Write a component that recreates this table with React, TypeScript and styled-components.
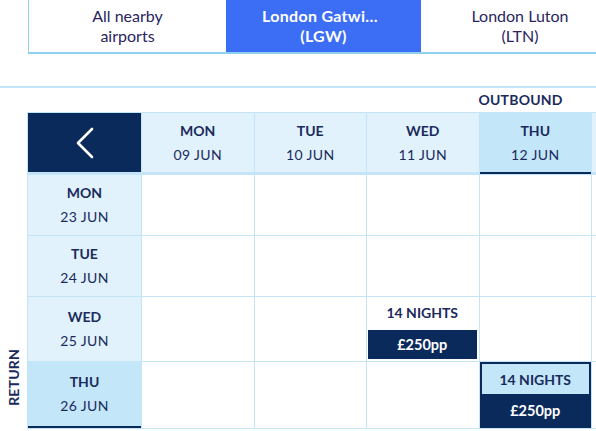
import React from 'react';
import styled, { createGlobalStyle } from 'styled-components';

const NAVY = '#0b2a5c';
const TEXT = '#1a2a5c';
const LINE = '#c4e5f8';
const HEAD_BG = '#e1f2fc';
const SEL_BG = '#c3e6f9';
const COLS = '113px repeat(5, 111.5px) 60px';

const GlobalStyle = createGlobalStyle`
  html, body {
    margin: 0;
    padding: 0;
    background: #ffffff;
    overflow: hidden;
  }
  body {
    font-family: Lato, "Liberation Sans", sans-serif;
    color: ${TEXT};
  }
`;

const Page = styled.div`
  width: 596px;
  height: 431px;
  overflow: hidden;
`;

const Tabs = styled.div`
  display: flex;
  margin-left: 28px;
  height: 52px;
  border-bottom: 2px solid #8fcff2;
  border-left: 1px solid #8fcff2;
  width: max-content;
`;

const Tab = styled.div<{ $active?: boolean; $w: number }>`
  width: ${p => p.$w}px;
  box-sizing: border-box;
  padding: 0 ${p => (p.$active ? 36 : 30)}px;
  display: flex;
  flex-direction: column;
  justify-content: center;
  align-items: center;
  text-align: center;
  font-size: 16px;
  line-height: 20px;
  letter-spacing: ${p => (p.$active ? 0.3 : 0)}px;
  background: ${p => (p.$active ? '#3c6df5' : '#ffffff')};
  color: ${p => (p.$active ? '#ffffff' : '#2a2560')};
  font-weight: ${p => (p.$active ? 700 : 400)};
`;

const TabName = styled.div`
  max-width: 100%;
  white-space: nowrap;
  overflow: hidden;
  text-overflow: ellipsis;
`;

const Rule = styled.div`
  margin-top: 32px;
  height: 2px;
  background: ${LINE};
`;

const Board = styled.div`
  display: grid;
  grid-template-columns: 27px auto;
  grid-template-rows: 24px auto;
`;

const LabelRow = styled.div`
  grid-column: 2;
  display: grid;
  grid-template-columns: ${COLS};
  padding-left: 1px;
`;

const Outbound = styled.div<{ $col: number }>`
  grid-column: ${p => p.$col};
  padding-left: 3px;
  font-size: 14px;
  font-weight: 700;
  line-height: 24px;
  letter-spacing: 0.2px;
`;

const Side = styled.div`
  display: flex;
  flex-direction: column;
  justify-content: flex-end;
  align-items: center;
  padding-bottom: 23px;
`;

const Vertical = styled.div`
  writing-mode: vertical-rl;
  transform: rotate(180deg);
  font-size: 14px;
  font-weight: 700;
  letter-spacing: 0.2px;
`;

const Calendar = styled.div`
  display: grid;
  grid-template-columns: ${COLS};
  grid-template-rows: 61px 60px 60px 64px 66px;
  gap: 1px;
  padding: 1px 0 1px 1px;
  background: ${LINE};
  width: max-content;
`;

const BackCell = styled.button`
  all: unset;
  display: flex;
  align-items: center;
  justify-content: center;
  background: ${NAVY};
  border-bottom: 2px solid ${LINE};
  cursor: pointer;
`;

const HeadCell = styled.div<{ $selected?: boolean; $underline: string }>`
  display: flex;
  flex-direction: column;
  align-items: center;
  justify-content: center;
  box-sizing: border-box;
  background: ${p => (p.$selected ? SEL_BG : HEAD_BG)};
  border-bottom: 2px solid ${p => (p.$selected ? NAVY : p.$underline)};
  font-size: 14px;
  line-height: 24px;
`;

const DayName = styled.div`
  font-weight: 700;
`;

const DayDate = styled.div`
  font-weight: 400;
  letter-spacing: 0.4px;
`;

const Cell = styled.div`
  background: #ffffff;
  display: flex;
  flex-direction: column;
  justify-content: flex-end;
  padding: 0 2px 2px 1px;
`;

const Nights = styled.div`
  height: 30px;
  margin-bottom: 3px;
  display: flex;
  align-items: center;
  justify-content: center;
  font-size: 14px;
  font-weight: 700;
`;

const Price = styled.div`
  height: 29px;
  background: ${NAVY};
  color: #ffffff;
  display: flex;
  align-items: center;
  justify-content: center;
  font-size: 14.5px;
  font-weight: 700;
`;

const PickedCell = styled.div`
  background: ${NAVY};
  border: 2px solid ${NAVY};
  display: flex;
  flex-direction: column;
`;

const PickedNights = styled(Nights)`
  background: ${SEL_BG};
  margin-bottom: 0;
`;

const PickedPrice = styled(Price)`
  flex: 1;
  height: auto;
`;

const Chevron = () => (
  <svg width="20" height="32" viewBox="0 0 20 32" fill="none">
    <polyline
      points="17,2 3,16 17,30"
      stroke="#ffffff"
      strokeWidth="2.6"
      strokeLinecap="round"
      strokeLinejoin="round"
    />
  </svg>
);

const outbound = [
  { day: 'MON', date: '09 JUN' },
  { day: 'TUE', date: '10 JUN' },
  { day: 'WED', date: '11 JUN' },
  { day: 'THU', date: '12 JUN' },
];

const returns = [
  { day: 'MON', date: '23 JUN' },
  { day: 'TUE', date: '24 JUN' },
  { day: 'WED', date: '25 JUN' },
  { day: 'THU', date: '26 JUN' },
];

const selOut = 3;
const selRet = 3;

// keyed by return row - outbound column
const offers: Record<string, { nights: number; price: string }> = {
  '2-2': { nights: 14, price: '£250pp' },
  '3-3': { nights: 14, price: '£250pp' },
};

export default function App() {
  return (
    <Page>
      <GlobalStyle />
      <Tabs>
        <Tab $w={197}>
          <TabName>All nearby</TabName>
          <div>airports</div>
        </Tab>
        <Tab $w={195} $active>
          <TabName>London Gatwick Airport</TabName>
          <div>(LGW)</div>
        </Tab>
        <Tab $w={198}>
          <TabName>London Luton</TabName>
          <div>(LTN)</div>
        </Tab>
      </Tabs>
      <Rule />
      <Board>
        <LabelRow>
          <Outbound $col={selOut + 2}>OUTBOUND</Outbound>
        </LabelRow>
        <Side>
          <Vertical>RETURN</Vertical>
        </Side>
        <Calendar>
          <BackCell aria-label="Previous">
            <Chevron />
          </BackCell>
          {outbound.map((d, i) => (
            <HeadCell key={d.date} $selected={i === selOut} $underline={LINE}>
              <DayName>{d.day}</DayName>
              <DayDate>{d.date}</DayDate>
            </HeadCell>
          ))}
          {/* next week's column, cut off by the viewport */}
          <HeadCell $underline={LINE} />
          <HeadCell $underline={LINE} />
          {returns.map((r, ri) => (
            <React.Fragment key={r.date}>
              <HeadCell
                $selected={ri === selRet}
                $underline="transparent"
                style={ri === selRet ? undefined : { borderBottomWidth: 0 }}
              >
                <DayName>{r.day}</DayName>
                <DayDate>{r.date}</DayDate>
              </HeadCell>
              {outbound.map((o, oi) => {
                const offer = offers[`${ri}-${oi}`];
                if (offer && ri === selRet && oi === selOut) {
                  return (
                    <PickedCell key={o.date}>
                      <PickedNights>{offer.nights} NIGHTS</PickedNights>
                      <PickedPrice>{offer.price}</PickedPrice>
                    </PickedCell>
                  );
                }
                return (
                  <Cell key={o.date}>
                    {offer && (
                      <>
                        <Nights>{offer.nights} NIGHTS</Nights>
                        <Price>{offer.price}</Price>
                      </>
                    )}
                  </Cell>
                );
              })}
              <Cell />
              <Cell />
            </React.Fragment>
          ))}
        </Calendar>
      </Board>
    </Page>
  );
}
